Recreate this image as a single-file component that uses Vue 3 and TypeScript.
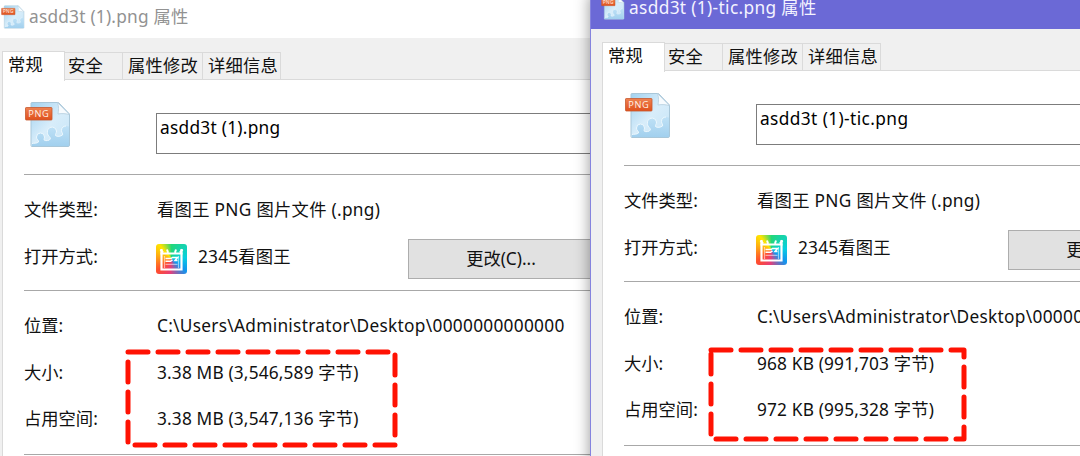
<script setup lang="ts">
interface FileWindow {
  id: string
  file: string
  size: string
  used: string
}

const windows: FileWindow[] = [
  { id: 'original', file: 'asdd3t (1).png', size: '3.38 MB (3,546,589 字节)', used: '3.38 MB (3,547,136 字节)' },
  { id: 'compressed', file: 'asdd3t (1)-tic.png', size: '968 KB (991,703 字节)', used: '972 KB (995,328 字节)' },
]
const tabs = ['常规', '安全', '属性修改', '详细信息']
</script>

<template>
  <main class="desktop">
    <svg class="symbols" width="0" height="0" aria-hidden="true">
      <defs>
        <linearGradient id="sheet" x1="0" y1="0" x2="1" y2="1">
          <stop offset="0" stop-color="#a2d2f0" />
          <stop offset=".5" stop-color="#d8edfa" />
          <stop offset="1" stop-color="#c5e4f7" />
        </linearGradient>
        <linearGradient id="puzzle" x1="0" y1="0" x2="0" y2="1">
          <stop offset="0" stop-color="#bfe1f6" />
          <stop offset="1" stop-color="#a2d0ee" />
        </linearGradient>
        <linearGradient id="label" x1="0" y1="0" x2="0" y2="1">
          <stop offset="0" stop-color="#ee8251" />
          <stop offset="1" stop-color="#e0501c" />
        </linearGradient>
        <symbol id="png-file" viewBox="0 0 46 47">
          <path d="M7 1.5h26.500l11 11.500v31q0 1.500-1.500 1.500H7q-1 0-1-1V2.500q0-1 1-1z" fill="url(#sheet)" stroke="#a9c7d9" stroke-width="1" />
          <path d="M7 45V42.500c2-.5 5 0 6.500-1.500.5-2-2-2-2-5a4 4 0 0 1 8 0c0 1.500-.8 2-.2 3.200 1.500 1 5.500.3 6-1.200.3-2-1.300-2-2.300-4-.7-1.500-1-4 0-5.500a4.500 4.500 0 0 1 8.500 1.500c0 2.500-1.500 3-1 4.500 1.500 1.500 5.500.8 7-.5.8-1.700-1-2-1-4.500 0-3 2-4.500 4.500-4.500l3 .5V45z" fill="url(#puzzle)" />
          <path d="M7 42.500c2-.5 5 0 6.500-1.500.5-2-2-2-2-5a4 4 0 0 1 8 0c0 1.500-.8 2-.2 3.200 1.500 1 5.500.3 6-1.200.3-2-1.300-2-2.300-4-.7-1.500-1-4 0-5.500a4.500 4.500 0 0 1 8.500 1.500c0 2.500-1.500 3-1 4.500 1.500 1.500 5.500.8 7-.5.8-1.700-1-2-1-4.500 0-3 2-4.500 4.500-4.500" fill="none" stroke="#edf8fe" stroke-width="1" />
          <path d="M32.500 1.500c1.500 4 1 8 .5 11.500 4-.7 8-.5 11.500.7z" fill="#f7fbfe" stroke="#b4cddd" stroke-width=".8" />
          <rect x=".5" y="6.500" width="26.500" height="12.500" rx=".7" fill="url(#label)" stroke="#c6582f" stroke-width=".8" />
          <text x="13.800" y="16" text-anchor="middle" font-family="Open Sans, sans-serif" font-size="9.200" letter-spacing=".6" fill="#fff2e8">PNG</text>
        </symbol>
      </defs>
    </svg>

    <section v-for="win in windows" :key="win.id" class="window" :class="win.id">
      <header class="title-bar">
        <svg class="title-icon"><use href="#png-file" /></svg>
        <h1>{{ win.file }} 属性</h1>
      </header>
      <nav class="tabs">
        <span v-for="(tab, i) in tabs" :key="tab" class="tab" :class="{ active: i === 0 }">{{ tab }}</span>
      </nav>
      <div class="panel">
        <div class="name-row">
          <svg class="file-icon"><use href="#png-file" /></svg>
          <div class="name-field">{{ win.file }}</div>
        </div>
        <div class="group type-group">
          <div class="row"><span class="caption">文件类型:</span><span class="type">看图王 PNG 图片文件 (.png)</span></div>
          <div class="row">
            <span class="caption">打开方式:</span>
            <div class="viewer-icon">
              <svg viewBox="0 0 31 30">
                <path d="M5.500 5V25.500H25.500V5" fill="none" stroke="#fff" stroke-width="2.200" />
                <path d="M4.500 9.500H26.500M4.500 5.500l2.500 3M26.500 5.500l-2.500 3M11 5.500l1 3M20 5.500l-1 3" fill="none" stroke="#fff" stroke-width="2" />
                <path d="M8.500 12v12M22.500 12v12" fill="none" stroke="#fff" stroke-opacity=".55" stroke-width="1.200" />
                <path d="M9.500 14.500h5.500l1.500-1h5l-2.500 3h2.500M9.500 17.300h5l2-1.500" fill="none" stroke="#fff" stroke-width="1.500" />
                <path d="M9.500 20.300h12" stroke="#fff" stroke-opacity=".65" stroke-width="1" />
              </svg>
            </div>
            <span class="viewer">2345看图王</span>
            <button class="change" type="button">更改(C)...</button>
          </div>
        </div>
        <div class="group detail-group">
          <div class="row"><span class="caption">位置:</span><span class="path">C:\Users\Administrator\Desktop\0000000000000</span></div>
          <div class="row"><span class="caption">大小:</span><span class="bytes">{{ win.size }}</span></div>
          <div class="row"><span class="caption">占用空间:</span><span class="bytes">{{ win.used }}</span></div>
        </div>
        <div class="group"></div>
      </div>
    </section>

    <svg class="marks" viewBox="0 0 1080 456">
      <path d="M128 352H395V445H128Z" />
      <path d="M711 350H964V439H711Z" />
    </svg>
  </main>
</template>

<style>
body { margin: 0; overflow: hidden; }
</style>

<style scoped>
.desktop {
  position: relative;
  width: 1080px;
  height: 456px;
  overflow: hidden;
  background: #fff;
  color: #111;
  font: 17.3px/24px "Noto Sans", "Noto Sans CJK SC", sans-serif;
  white-space: nowrap;
}
.symbols { position: absolute; }
.window {
  position: absolute;
  box-sizing: border-box;
  width: 620px;
  height: 500px;
  border-left: 1px solid #8583de;
  background: #f0f0f0;
}
.original { left: -10px; top: 0; }
.compressed { left: 590px; top: -9px; box-shadow: 0 3px 14px rgba(0, 0, 0, .42); }
.title-bar {
  display: flex;
  align-items: center;
  box-sizing: border-box;
  height: 38px;
  padding: 0 0 4px 10px;
  background: #fff;
  color: #929292;
}
.compressed .title-bar { background: #6b69d6; color: #f4f3ff; }
.title-icon { width: 24px; height: 24px; margin-right: 4px; }
h1 { margin: 0; font: inherit; letter-spacing: .22px; }
.compressed h1 { letter-spacing: .35px; }
.tabs { display: flex; align-items: flex-end; height: 42px; padding-left: 11px; }
.tab {
  box-sizing: border-box;
  height: 28px;
  border: 1px solid #dadada;
  border-left: 0;
  border-bottom: 0;
  padding: 1px 0 0 5px;
  letter-spacing: .2px;
}
.tab:nth-child(1) { width: 63px; }
.tab:nth-child(2) { width: 58px; padding-left: 3px; }
.tab:nth-child(3) { width: 80px; padding-left: 5px; }
.tab:nth-child(4) { width: 78px; }
.tab.active {
  position: relative;
  z-index: 1;
  height: 30px;
  margin-bottom: -1px;
  border-left: 1px solid #dadada;
  background: #fff;
}
.panel {
  box-sizing: border-box;
  height: 420px;
  margin: -1px 0 0 11px;
  padding-left: 21px;
  border: solid #dadada;
  border-width: 1px 0 0 1px;
  background: #fff;
}
.name-row { display: flex; align-items: flex-start; height: 94px; }
.file-icon { width: 46px; height: 47px; margin: 21px 85px 0 1px; }
.name-field {
  box-sizing: border-box;
  width: 441px;
  height: 41px;
  margin-top: 33px;
  padding: 2px 3px;
  border: 1px solid #7c7c7c;
  color: #000;
  letter-spacing: .27px;
}
.compressed .name-field { letter-spacing: .4px; }
.group { box-sizing: border-box; border-top: 1px solid #a8a8a8; }
.type-group { height: 116px; padding-top: 11px; }
.detail-group { height: 164px; padding-top: 12px; }
.row { display: flex; align-items: center; height: 47px; }
.detail-group .row { height: 46.6px; }
.caption { width: 133px; }
.type { letter-spacing: .3px; }
.path { letter-spacing: .28px; }
.bytes { letter-spacing: .16px; }
.viewer-icon {
  width: 31px;
  height: 30px;
  margin: 4px 11px 0 -1px;
  border-radius: 3px;
  overflow: hidden;
  background: conic-gradient(from 0deg, #23d779, #08cfe1 85deg, #1195ef 130deg, #e63e79 185deg, #ff4d2e 230deg, #ff9d16 275deg, #ffe400 320deg, #23d779);
}
.viewer-icon svg { display: block; }
.viewer { width: 210px; letter-spacing: .2px; }
.change {
  box-sizing: border-box;
  width: 188px;
  height: 40px;
  margin-top: 4px;
  padding: 0 2px 0 0;
  border: 1px solid #adadad;
  background: #e1e1e1;
  color: inherit;
  font: inherit;
}
.marks { position: absolute; inset: 0; width: 1080px; height: 456px; }
.marks path {
  fill: none;
  stroke: #ff1203;
  stroke-width: 5;
  stroke-linecap: round;
  stroke-linejoin: round;
  stroke-dasharray: 20 10;
}
</style>
